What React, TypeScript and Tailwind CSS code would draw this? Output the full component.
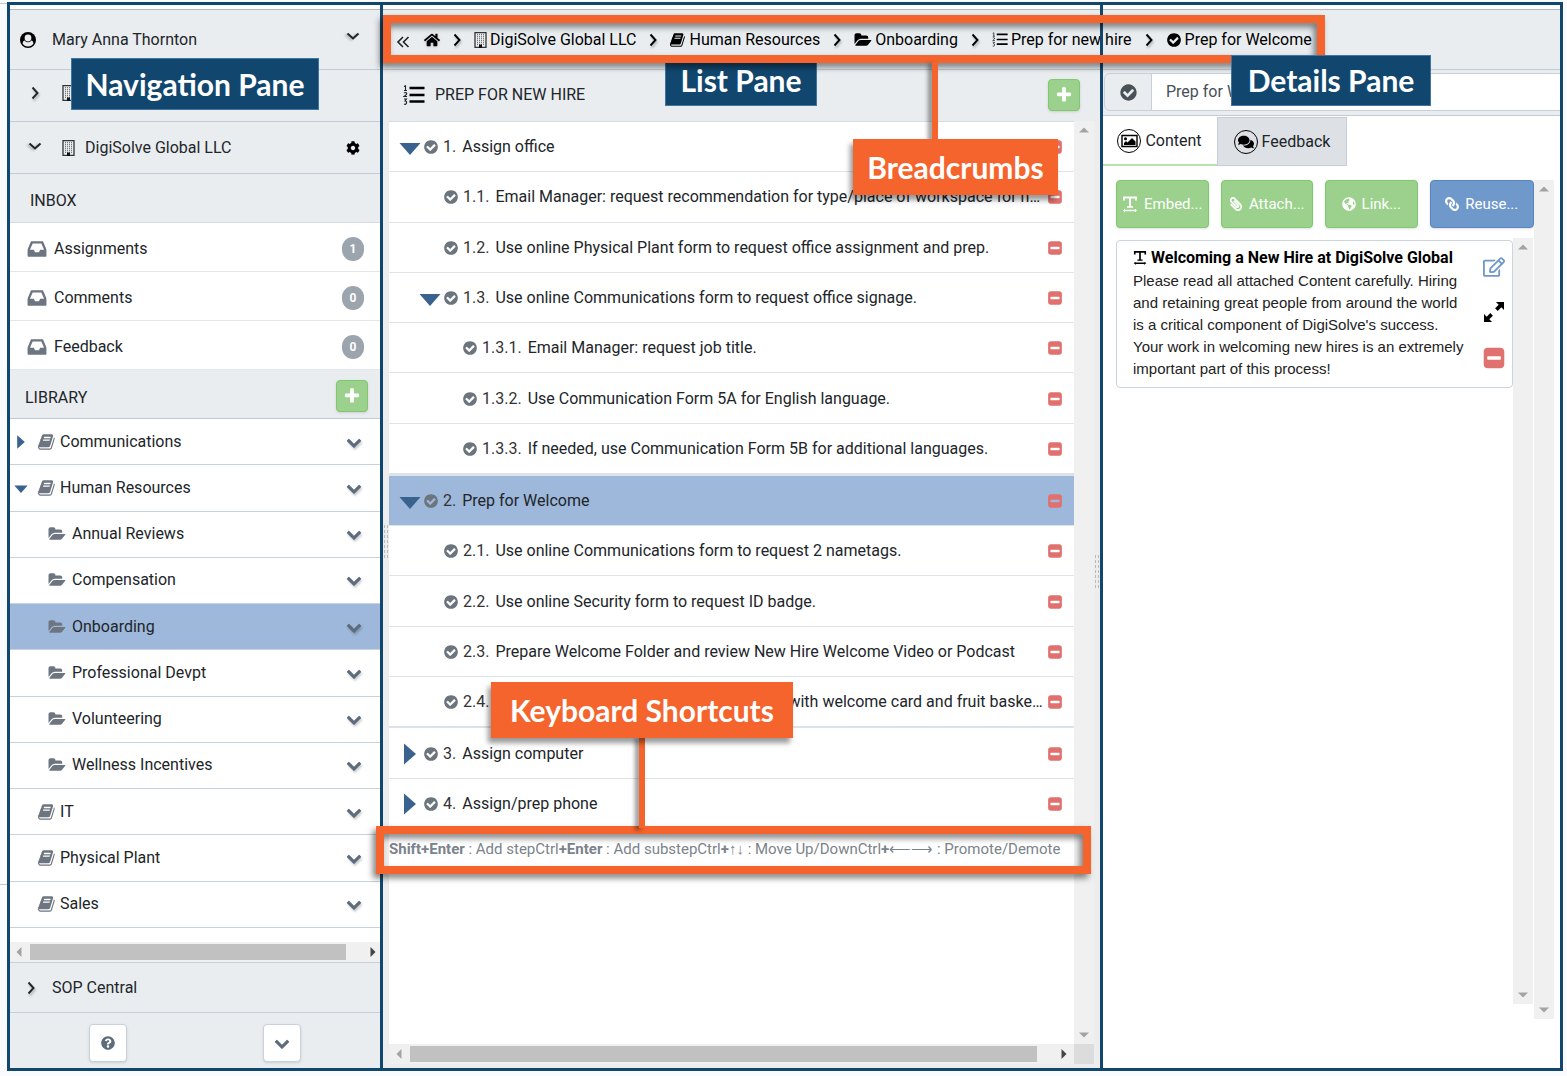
import { ReactNode } from 'react';
import clsx from 'clsx';
import {
  FaCog,
  FaComments,
  FaGlobeAmericas,
  FaHome,
  FaLink,
  FaPaperclip,
  FaQuestionCircle,
  FaRegEdit,
} from 'react-icons/fa';

type IconProps = { className?: string };

const glyphs = {
  book: 'M1639 478q40 57 18 129l-275 906q-19 64-76.5 107.5t-122.5 43.5h-923q-77 0-148.5-53.5t-99.5-131.5q-24-67-2-127 0-4 3-27t4-37q1-8-3-21.5t-3-19.5q2-11 8-21t16.5-23.5 16.5-23.5q23-38 45-91.5t30-91.5q3-10 .5-30t-.5-28q3-11 17-28t17-23q21-36 42-92t25-90q1-9-2.5-32t.5-28q4-13 22-30.5t22-22.5q19-26 42.5-84.5t27.5-96.5q1-8-3-25.5t-2-26.5q2-8 9-18t18-23 17-21q8-12 16.5-30.5t15-35 16-36 19.5-32 26.5-23.5 36-11.5 47.5 5.5l-1 3q38-9 51-9h761q74 0 114 56t18 130l-274 906q-36 119-71.5 153.5t-128.5 34.5h-869q-27 0-38 15-11 16-1 43 24 70 144 70h923q29 0 56-15.5t35-41.5l300-987q7-22 5-57 38 15 59 43zm-1064 2q-4 13 2 22.5t20 9.5h608q13 0 25.5-9.5t16.5-22.5l21-64q4-13-2-22.5t-20-9.5h-608q-13 0-25.5 9.5t-16.5 22.5zm-83 256q-4 13 2 22.5t20 9.5h608q13 0 25.5-9.5t16.5-22.5l21-64q4-13-2-22.5t-20-9.5h-608q-13 0-25.5 9.5t-16.5 22.5z',
  chevron:
    'M1683 808l-742 741q-19 19-45 19t-45-19l-742-741q-19-19-19-45.5t19-45.5l166-165q19-19 45-19t45 19l531 531 531-531q19-19 45-19t45 19l166 165q19 19 19 45.5t-19 45.5z',
  check:
    'M1412 734q0-28-18-46l-91-90q-19-19-45-19t-45 19l-408 407-226-226q-19-19-45-19t-45 19l-91 90q-18 18-18 46 0 27 18 45l362 362q19 19 45 19 27 0 46-19l543-543q18-18 18-45zm252 162q0 209-103 385.5t-279.5 279.5-385.5 103-385.5-103-279.5-279.5-103-385.5 103-385.5 279.5-279.5 385.5-103 385.5 103 279.5 279.5 103 385.5z',
  minus:
    'M1408 960v-128q0-26-19-45t-45-19h-896q-26 0-45 19t-19 45v128q0 26 19 45t45 19h896q26 0 45-19t19-45zm256-544v960q0 119-84.5 203.5t-203.5 84.5h-960q-119 0-203.5-84.5t-84.5-203.5v-960q0-119 84.5-203.5t203.5-84.5h960q119 0 203.5 84.5t84.5 203.5z',
  folder:
    'M1879 952q0 31-31 66l-336 396q-43 51-120.5 86.5t-143.5 35.5h-1088q-34 0-60.5-13t-26.5-43q0-31 31-66l336-396q43-51 120.5-86.5t143.5-35.5h1088q34 0 60.5 13t26.5 43zm-343-344v160h-832q-94 0-197 47.5t-164 119.5l-337 396-5 6q0-4-.5-12.5t-.5-12.5v-960q0-92 66-158t158-66h320q92 0 158 66t66 158v32h544q92 0 158 66t66 158z',
  inbox:
    'M1151 960h316q-1-3-2.5-8t-2.5-8l-212-496h-708l-212 496q-1 2-2.5 8t-2.5 8h316l95 192h320zm513 30v482q0 26-19 45t-45 19h-1408q-26 0-45-19t-19-45v-482q0-62 25-123l238-552q10-25 36.5-42t52.5-17h832q26 0 52.5 17t36.5 42l238 552q25 61 25 123z',
  plus: 'M1600 736v192q0 40-28 68t-68 28h-416v416q0 40-28 68t-68 28h-192q-40 0-68-28t-28-68v-416h-416q-40 0-68-28t-28-68v-192q0-40 28-68t68-28h416v-416q0-40 28-68t68-28h192q40 0 68 28t28 68v416h416q40 0 68 28t28 68z',
};

const Glyph = ({ name, className }: { name: keyof typeof glyphs; className?: string }) => (
  <svg
    viewBox={name === 'folder' ? '0 0 1900 1792' : '0 0 1792 1792'}
    fill="currentColor"
    aria-hidden="true"
    className={clsx('shrink-0', className)}
  >
    <path d={glyphs[name]} />
  </svg>
);

const Angle = ({ className }: IconProps) => (
  <svg
    viewBox="0 0 14 14"
    fill="none"
    stroke="currentColor"
    strokeWidth="1.900"
    aria-hidden="true"
    className={clsx('size-[14px] shrink-0 drop-shadow-[1px_2px_1px_rgba(0,0,0,0.25)]', className)}
  >
    <path d="M4.500 1.500 9.500 7l-5 5.500" />
  </svg>
);

const DoubleAngle = () => (
  <svg
    viewBox="0 0 14 14"
    fill="none"
    stroke="#222"
    strokeWidth="1.600"
    aria-hidden="true"
    className="mt-1 size-[14px] shrink-0"
  >
    <path d="M7 2 2 7l5 5M12.500 2l-5 5 5 5" />
  </svg>
);

const Building = ({ className }: IconProps) => (
  <svg viewBox="0 0 13 16" fill="none" aria-hidden="true" className={clsx('h-4 w-[13px] shrink-0', className)}>
    <path d="M1 .5h11v15H1z" stroke="#333" strokeWidth="1.3" />
    <path
      d="M3.5 2v11M5.5 2v11M7.500 2v11M9.500 2v11"
      stroke="#777"
      strokeWidth="1"
      strokeDasharray="1.300 .7"
    />
    <path d="M5 12.500h3V16H5z" fill="#111" />
  </svg>
);

const NumberedList = ({ className }: IconProps) => (
  <svg viewBox="0 0 22 20" aria-hidden="true" className={clsx('shrink-0', className)}>
    <path d="M6.500 3h15M6.500 10h15M6.500 16.500h15" stroke="#000" strokeWidth="2.400" />
    <path
      d="M1 1.500 2.500.8v4.700M1 5.500h3M1 8q1.500-1 2.500 0t-2.500 3.500h3M1 14h2.500L2 16q2 0 1.500 2T1 19"
      fill="none"
      stroke="#222"
      strokeWidth="1.100"
    />
  </svg>
);

const TextWidth = ({ className }: IconProps) => (
  <svg viewBox="0 0 16 17" fill="none" stroke="currentColor" aria-hidden="true" className={clsx('shrink-0', className)}>
    <path d="M2 4.500V1.500h12v3M8 1.500v9.500" strokeWidth="1.900" />
    <path d="M5 11h6M2 14.500h12" strokeWidth="1.500" />
    <path d="M3 13 1.500 14.500 3 16M13 13l1.500 1.500L13 16" strokeWidth="1" />
  </svg>
);

const UserCircle = () => (
  <svg viewBox="0 0 16 16" aria-hidden="true" className="size-4 shrink-0">
    <circle cx="8" cy="8" r="8" fill="#000" />
    <circle cx="8" cy="6" r="3.400" fill="#e9edf0" />
    <path d="M2.500 11.200Q3 8.600 4.600 8.400 6 10.300 8 10.300t3.400-1.900q1.600.2 2.100 2.800Q11.600 14.400 8 14.400t-5.500-3.200z" fill="#e9edf0" />
  </svg>
);

const Picture = () => (
  <svg viewBox="0 0 17 14" aria-hidden="true" className="h-[14px] w-[17px]">
    <path d="M1 1.500h15v11H1z" fill="none" stroke="#000" strokeWidth="1.400" />
    <circle cx="4.500" cy="4.800" r="1.500" fill="#000" />
    <path d="M3 11V9l2-2 1.500 1.500L11 4l3.500 3.500V11z" fill="#000" />
  </svg>
);

const Expand = () => (
  <svg viewBox="0 0 20 20" aria-hidden="true" className="size-5">
    <path d="M12 0h8v8l-2.700-2.700-3.600 3.600-2.600-2.600 3.600-3.600zM8 20H0v-8l2.700 2.700 3.600-3.600 2.600 2.600-3.600 3.600z" fill="#000" />
  </svg>
);

const Triangle = ({ open, small }: { open?: boolean; small?: boolean }) => (
  <svg
    viewBox="0 0 22 22"
    fill="#3a628f"
    aria-hidden="true"
    className={clsx('shrink-0', small ? 'size-[14px]' : 'size-[22px]')}
  >
    <path d={open ? 'M.5 7h21L11 19z' : 'M5 .5v21L17 11z'} />
  </svg>
);

const Arrow = ({ dir, dark }: { dir: 'up' | 'down' | 'left' | 'right'; dark?: boolean }) => (
  <svg
    viewBox="0 0 10 10"
    aria-hidden="true"
    className={clsx('size-[10px] shrink-0', dark ? 'fill-[#444]' : 'fill-[#a3a3a3]')}
  >
    <path
      d={
        { up: 'M0 7.500h10L5 2.500z', down: 'M0 2.500h10L5 7.500z', left: 'M7.500 0v10L2.500 5z', right: 'M2.500 0v10L7.500 5z' }[dir]
      }
    />
  </svg>
);

const VerticalScroll = ({ className }: IconProps) => (
  <div className={clsx('flex shrink-0 flex-col items-center justify-between bg-[#f0f0f0] py-1', className)}>
    <Arrow dir="up" />
    <Arrow dir="down" />
  </div>
);

const AddButton = ({ label }: { label: string }) => (
  <button
    type="button"
    aria-label={label}
    className="flex size-8 items-start justify-center rounded-sm border border-[#7fc86f] bg-[#9bd18c] pt-1.5 text-white shadow"
  >
    <Glyph name="plus" className="size-[18px]" />
  </button>
);

const inbox = [
  { name: 'Assignments', count: 1 },
  { name: 'Comments', count: 0 },
  { name: 'Feedback', count: 0 },
];

type LibraryItem = { name: string; folder?: boolean; state?: 'open' | 'closed'; active?: boolean };

const library: LibraryItem[] = [
  { name: 'Communications', state: 'closed' },
  { name: 'Human Resources', state: 'open' },
  { name: 'Annual Reviews', folder: true },
  { name: 'Compensation', folder: true },
  { name: 'Onboarding', folder: true, active: true },
  { name: 'Professional Devpt', folder: true },
  { name: 'Volunteering', folder: true },
  { name: 'Wellness Incentives', folder: true },
  { name: 'IT' },
  { name: 'Physical Plant' },
  { name: 'Sales' },
];

const NavigationPane = () => (
  <nav className="flex w-[373px] shrink-0 flex-col border-r-[3px] border-[#11476f] bg-[#e9edf0]">
    <div className="h-[5px] border-b border-[#b5b8bc] bg-white" />
    <button type="button" className="flex h-[60px] items-center border-b border-[#c3cbd8] pr-5 pl-2.5 text-left">
      <UserCircle />
      <span className="ml-4 flex-1">Mary Anna Thornton</span>
      <Angle className="mb-2 rotate-90" />
    </button>
    <button
      type="button"
      aria-label="Expand organization"
      className="flex h-[52px] items-center gap-4 border-b border-[#c3cbd8] px-[18px] pb-1.5"
    >
      <Angle />
      <Building className="ml-1" />
    </button>
    <div className="flex h-[52px] items-center border-b border-[#c3cbd8] pr-5 pl-[18px]">
      <Angle className="mb-1 rotate-90" />
      <Building className="ml-5" />
      <span className="ml-2.5 flex-1">DigiSolve Global LLC</span>
      <button type="button" aria-label="Settings">
        <FaCog className="size-[14px] text-black" />
      </button>
    </div>
    <h2 className="flex h-[49px] items-center border-b border-[#d5dae3] pt-1.5 pl-5">INBOX</h2>
    <ul className="bg-white">
      {inbox.map((item) => (
        <li key={item.name} className="flex h-[49px] items-center border-b border-[#e4e7ea] px-4 pt-1">
          <Glyph name="inbox" className="size-[22px] text-[#6c7580]" />
          <a href="#" className="ml-1.5 flex-1 text-[#212529]">
            {item.name}
          </a>
          <span className="flex h-6 w-[22px] items-center justify-center rounded-full bg-[#9ca4ad] text-xs font-bold text-white">
            {item.count}
          </span>
        </li>
      ))}
    </ul>
    <div className="flex h-[49px] items-center justify-between border-b border-[#c3ccd6] pt-1 pr-3 pl-[15px]">
      <h2 className="pt-1">LIBRARY</h2>
      <AddButton label="Add to library" />
    </div>
    <ul className="flex h-[509px] flex-col bg-white">
      {library.map((item) => (
        <li
          key={item.name}
          className={clsx('flex flex-1 items-center border-b border-[#c8d2dc] pr-[18px] pl-1', item.active && 'bg-[#9db8da]')}
        >
          <span className="w-5">{item.state && <Triangle small open={item.state === 'open'} />}</span>
          {item.folder ? (
            <Glyph name="folder" className="mr-1.5 ml-[14px] h-4 w-[18px] text-[#6c7580]" />
          ) : (
            <Glyph name="book" className="mr-1 ml-1 size-[18px] text-[#6c7580]" />
          )}
          <a href="#" className="flex-1">
            {item.name}
          </a>
          <button type="button" aria-label={`${item.name} menu`}>
            <Glyph name="chevron" className="size-4 text-[#5d6c7d] drop-shadow-[1px_2px_1px_rgba(0,0,0,0.2)]" />
          </button>
        </li>
      ))}
    </ul>
    <div className="min-h-[14px] flex-1 bg-white" />
    <div className="flex h-5 items-center bg-[#f0f0f0] pr-0.5 pl-1">
      <Arrow dir="left" />
      <div className="mr-[22px] ml-1.5 h-4 flex-1 bg-[#c1c1c1]" />
      <Arrow dir="right" dark />
    </div>
    <button
      type="button"
      className="flex h-[51px] items-center gap-[14px] border-y border-[#c8cfdb] px-[14px] text-left"
    >
      <Angle />
      SOP Central
    </button>
    <div className="flex h-[55px] items-center pt-1">
      <button
        type="button"
        aria-label="Help"
        className="ml-[79px] flex h-[38px] w-[38px] items-center justify-center rounded-sm border border-[#c9d1dc] bg-white shadow-sm"
      >
        <FaQuestionCircle className="size-[14px] text-[#5d6c7d]" />
      </button>
      <button
        type="button"
        aria-label="More"
        className="ml-[136px] flex h-[38px] w-[38px] items-center justify-center rounded-sm border border-[#c9d1dc] bg-white shadow-sm"
      >
        <Glyph name="chevron" className="size-4 text-[#5d6c7d]" />
      </button>
    </div>
  </nav>
);

const crumbs: { name: string; icon: ReactNode }[] = [
  { name: 'DigiSolve Global LLC', icon: <Building /> },
  { name: 'Human Resources', icon: <Glyph name="book" className="size-4" /> },
  { name: 'Onboarding', icon: <Glyph name="folder" className="h-4 w-[18px]" /> },
  { name: 'Prep for new hire', icon: <NumberedList className="h-[15px] w-4" /> },
  { name: 'Prep for Welcome', icon: <Glyph name="check" className="size-4" /> },
];

const Breadcrumbs = () => (
  <nav className="flex h-[65px] flex-col border-b border-[#c3ccd6] bg-[#e9edf0]">
    <div className="h-[5px] border-b border-[#b5b8bc] bg-white" />
    <ol className="flex flex-1 items-center pl-[13px] whitespace-nowrap text-black">
      <li className="flex items-center gap-3.5">
        <button type="button" aria-label="Collapse">
          <DoubleAngle />
        </button>
        <a href="#" aria-label="Home">
          <FaHome className="size-4 drop-shadow" />
        </a>
      </li>
      {crumbs.map((crumb) => (
        <li key={crumb.name} className="flex items-center">
          <Angle className="mx-2.5" />
          <a href="#" className="flex items-center gap-[3px]">
            {crumb.icon}
            {crumb.name}
          </a>
        </li>
      ))}
    </ol>
  </nav>
);

type Step = { no: string; text: string; level: number; open?: boolean; closed?: boolean; active?: boolean };

const groups: { height: string; steps: Step[] }[] = [
  {
    height: 'h-[354px] border-b-[3px]',
    steps: [
      { no: '1.', text: 'Assign office', level: 0, open: true },
      {
        no: '1.1.',
        text: 'Email Manager: request recommendation for type/place of workspace for new hire.',
        level: 1,
      },
      { no: '1.2.', text: 'Use online Physical Plant form to request office assignment and prep.', level: 1 },
      { no: '1.3.', text: 'Use online Communications form to request office signage.', level: 1, open: true },
      { no: '1.3.1.', text: 'Email Manager: request job title.', level: 2 },
      { no: '1.3.2.', text: 'Use Communication Form 5A for English language.', level: 2 },
      { no: '1.3.3.', text: 'If needed, use Communication Form 5B for additional languages.', level: 2 },
    ],
  },
  {
    height: 'h-[252px] border-b-2',
    steps: [
      { no: '2.', text: 'Prep for Welcome', level: 0, open: true, active: true },
      { no: '2.1.', text: 'Use online Communications form to request 2 nametags.', level: 1 },
      { no: '2.2.', text: 'Use online Security form to request ID badge.', level: 1 },
      { no: '2.3.', text: 'Prepare Welcome Folder and review New Hire Welcome Video or Podcast', level: 1 },
      {
        no: '2.4.',
        text: 'Prepare the office and work space ahead with welcome card and fruit basket for arrival.',
        level: 1,
      },
    ],
  },
  { height: 'h-[51px] border-b', steps: [{ no: '3.', text: 'Assign computer', level: 0, closed: true }] },
  { height: 'h-[50px] border-b', steps: [{ no: '4.', text: 'Assign/prep phone', level: 0, closed: true }] },
];

const StepRow = ({ step }: { step: Step }) => (
  <li
    className={clsx(
      'flex flex-1 items-center border-b border-[#dfe4ea] pt-px pr-[11px] last:border-b-0',
      step.level === 0 && 'pl-2.5',
      step.level === 1 && 'pl-[30px]',
      step.level === 2 && 'pl-[49px]',
      step.active && 'bg-[#9db8da]'
    )}
  >
    <span className="mr-0.5 flex w-[22px] shrink-0">
      {(step.open || step.closed) && <Triangle open={step.open} />}
    </span>
    <Glyph name="check" className="size-4 text-[#6c757d]" />
    <span className="ml-1 text-[#333]">{step.no}</span>
    <span className="ml-1.5 min-w-0 flex-1 truncate text-[#212529]">{step.text}</span>
    <button type="button" aria-label={`Remove ${step.no}`}>
      <Glyph name="minus" className="size-4 text-[#e0716e]" />
    </button>
  </li>
);

const ListPane = () => (
  <section className="flex w-[719px] shrink-0 flex-col bg-[#ededed] pl-1.5">
    <header className="flex h-[51px] items-center bg-[#e9edf0] pr-[22px] pb-0.5 pl-[14px]">
      <NumberedList className="h-5 w-[22px]" />
      <h2 className="ml-2.5 flex-1">PREP FOR NEW HIRE</h2>
      <AddButton label="Add step" />
    </header>
    <div className="mr-2 flex flex-1 flex-col">
      <div className="flex flex-1 bg-white">
        <div className="flex min-w-0 flex-1 flex-col border-t border-[#d5dce4]">
          {groups.map((group) => (
            <ul key={group.steps[0].no} className={clsx('flex flex-col border-[#dde2e8]', group.height)}>
              {group.steps.map((step) => (
                <StepRow key={step.no} step={step} />
              ))}
            </ul>
          ))}
          <p className="pt-2 text-[15px] leading-6 whitespace-nowrap text-[#7b838b]">
            <b className="font-bold">Shift+Enter</b> : Add stepCtrl<b>+Enter</b> : Add substepCtrl<b>+</b>↑↓ : Move
            Up/DownCtrl<b>+</b>⟵⟶ : Promote/Demote
          </p>
        </div>
        <VerticalScroll className="w-5" />
      </div>
      <div className="mb-1 flex h-5 bg-[#f0f0f0]">
        <div className="flex flex-1 items-center px-[5px]">
          <Arrow dir="left" />
          <div className="mr-[22px] ml-1.5 h-4 flex-1 bg-[#c1c1c1]" />
          <Arrow dir="right" dark />
        </div>
        <div className="w-5 bg-[#dcdcdc]" />
      </div>
    </div>
  </section>
);

const actions = [
  { name: 'Embed...', icon: <TextWidth className="h-[17px] w-4" />, style: 'w-[93px] border-[#7fc86f] bg-[#9bd18c]' },
  {
    name: 'Attach...',
    icon: <FaPaperclip className="size-[14px] -scale-x-100" />,
    style: 'w-[93px] border-[#7fc86f] bg-[#9bd18c]',
  },
  {
    name: 'Link...',
    icon: <FaGlobeAmericas className="size-[14px]" />,
    style: 'w-[93px] border-[#7fc86f] bg-[#9bd18c]',
  },
  {
    name: 'Reuse...',
    icon: <FaLink className="size-[14px] -scale-x-100" />,
    style: 'w-[105px] border-[#5687c4] bg-[#6f98cb]',
  },
];

const DetailsPane = () => (
  <section className="flex min-w-0 flex-1 flex-col bg-white">
    <div className="flex h-[46px] border-b border-[#c3ccd6] bg-[#e9edf0] pt-[3px] pb-1">
      <div className="ml-0.5 flex w-12 items-center justify-center rounded-l-md border border-[#c8d0d8]">
        <Glyph name="check" className="size-[19px] text-[#495057]" />
      </div>
      <input
        aria-label="Step name"
        defaultValue="Prep for Welcome"
        className="min-w-0 flex-1 border-y border-[#c8d0d8] bg-white px-[14px] text-[#495057]"
      />
    </div>
    <div role="tablist" className="flex h-[50px] pt-px">
      <button
        type="button"
        role="tab"
        aria-selected="true"
        className="flex w-[115px] items-center justify-center gap-1 border-b-2 border-[#b9e0ae]"
      >
        <span className="flex size-6 items-center justify-center rounded-full border border-black">
          <Picture />
        </span>
        Content
      </button>
      <button
        type="button"
        role="tab"
        aria-selected="false"
        className="flex w-[130px] items-center justify-center gap-1 border border-[#c5cdd8] bg-[#dde1e5]"
      >
        <span className="flex size-6 items-center justify-center rounded-full border border-black">
          <FaComments className="size-4 text-black" />
        </span>
        Feedback
      </button>
    </div>
    <div className="mt-[14px] mr-1.5 mb-[49px] flex flex-1 justify-between">
      <div className="flex min-w-0 flex-1 flex-col pl-[14px]">
        <div className="flex h-12 gap-3">
          {actions.map((action) => (
            <button
              type="button"
              key={action.name}
              className={clsx(
                'flex items-center justify-center gap-1.5 rounded-sm border text-[15px] text-white shadow',
                action.style
              )}
            >
              {action.icon}
              {action.name}
            </button>
          ))}
        </div>
        <div className="mt-2.5 mb-[15px] flex flex-1 pr-px">
          <div className="min-w-0 flex-1 pt-0.5">
            <article className="flex rounded-sm border border-[#ccd4de] pt-[5px] pr-1.5 pb-[7px] pl-4">
              <div className="min-w-0 flex-1">
                <h3 className="flex items-center gap-1 font-bold whitespace-nowrap text-black">
                  <TextWidth className="h-4 w-[14px]" />
                  Welcoming a New Hire at DigiSolve Global
                </h3>
                <p className="pr-3 font-['Liberation_Sans',sans-serif] text-[15px] leading-[22px] text-[#222]">
                  Please read all attached Content carefully. Hiring and retaining great people from around the world
                  is a critical component of DigiSolve's success. Your work in welcoming new hires is an extremely
                  important part of this process!
                </p>
              </div>
              <div className="flex w-6 shrink-0 flex-col items-center gap-6 pt-2.5">
                <button type="button" aria-label="Edit">
                  <FaRegEdit className="size-[22px] text-[#6f98cb]" />
                </button>
                <button type="button" aria-label="Expand">
                  <Expand />
                </button>
                <button type="button" aria-label="Remove">
                  <Glyph name="minus" className="size-6 text-[#e0716e]" />
                </button>
              </div>
            </article>
          </div>
          <VerticalScroll className="w-5" />
        </div>
      </div>
      <VerticalScroll className="w-5" />
    </div>
  </section>
);

const Grip = ({ className }: IconProps) => (
  <div
    className={clsx(
      'absolute h-9 w-1.5 bg-[radial-gradient(#bbb_1px,transparent_1px)] bg-[size:3px_5px]',
      className
    )}
  />
);

const PaneLabel = ({ children, className }: { children: ReactNode; className: string }) => (
  <div
    className={clsx(
      "absolute flex items-center justify-center border border-[#3f74a3] bg-[#11476f] font-['Lato',sans-serif] text-[30px] font-bold whitespace-nowrap text-white",
      className
    )}
  >
    {children}
  </div>
);

const Callout = ({ children, className }: { children: ReactNode; className: string }) => (
  <div
    className={clsx(
      "absolute flex h-14 items-center justify-center bg-[#f4642c] font-['Lato',sans-serif] text-[30px] font-bold whitespace-nowrap text-white shadow-[-3px_5px_5px_rgba(0,0,0,0.4)]",
      className
    )}
  >
    {children}
  </div>
);

const outline = 'absolute border-8 border-[#f4642c] drop-shadow-[-3px_4px_3px_rgba(0,0,0,0.5)]';
const stem = 'absolute w-1.5 bg-[#f4642c] shadow-[-4px_2px_4px_rgba(0,0,0,0.4)]';

const Annotations = () => (
  <div className="pointer-events-none">
    <div className="absolute top-[5px] bottom-2 left-[1100px] w-[3px] bg-[#11476f]" />
    <Grip className="top-[524px] left-[383px]" />
    <Grip className="top-[554px] left-[1094px]" />
    <PaneLabel className="top-[58px] left-[71px] h-[52px] w-[248px]">Navigation Pane</PaneLabel>
    <PaneLabel className="top-[55px] left-[665px] h-[51px] w-[152px]">List Pane</PaneLabel>
    <div className={clsx(outline, 'top-[15px] left-[383px] h-12 w-[942px]')} />
    <PaneLabel className="top-[55px] left-[1231px] h-[51px] w-[200px]">Details Pane</PaneLabel>
    <div className={clsx(stem, 'top-[62px] left-[932px] h-20')} />
    <Callout className="top-[139px] left-[853px] w-[205px]">Breadcrumbs</Callout>
    <div className={clsx(outline, 'top-[826px] left-[376px] h-12 w-[715px]')} />
    <div className={clsx(stem, 'top-[736px] left-[639px] h-[92px]')} />
    <Callout className="top-[682px] left-[491px] w-[302px]">Keyboard Shortcuts</Callout>
  </div>
);

const App = () => (
  <div className="relative flex min-h-screen bg-[#fafbfe] pt-0.5 pr-1 pb-[5px] pl-[7px] font-['Roboto',sans-serif] text-base text-[#212529]">
    <div className="absolute top-[3px] left-0 h-px w-[7px] bg-[#c5c8cc]" />
    <div className="absolute top-[884px] left-0 h-px w-[7px] bg-[#c5c8cc]" />
    <main className="flex min-w-0 flex-1 border-[3px] border-[#11476f]">
      <NavigationPane />
      <div className="flex min-w-0 flex-1 flex-col">
        <Breadcrumbs />
        <div className="flex flex-1">
          <ListPane />
          <DetailsPane />
        </div>
      </div>
    </main>
    <Annotations />
  </div>
);

export default App;
